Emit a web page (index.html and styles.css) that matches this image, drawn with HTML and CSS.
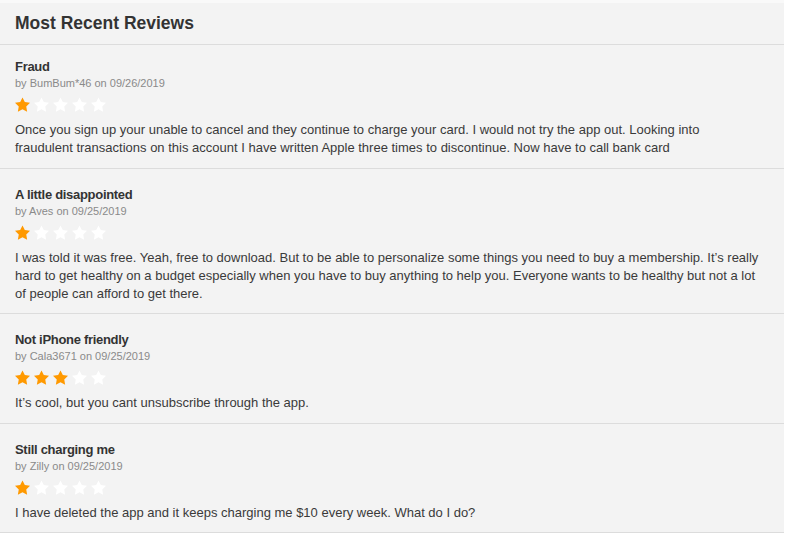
FILE: index.html
```html
<!DOCTYPE html>
<html lang="en">
<head>
<meta charset="utf-8">
<title>Most Recent Reviews</title>
<link rel="stylesheet" href="styles.css">
</head>
<body>
<svg width="0" height="0" class="defs" aria-hidden="true">
  <defs>
    <path id="star" d="M12 2l3.09 6.26L22 9.27l-5 4.87 1.18 6.88L12 17.77l-6.18 3.25L7 14.14 2 9.27l6.91-1.01L12 2z"/>
  </defs>
</svg>
<section class="panel">
  <h2 class="panel-title">Most Recent Reviews</h2>

  <article class="review">
    <h3 class="review-title">Fraud</h3>
    <div class="byline">by BumBum*46 on 09/26/2019</div>
    <div class="stars">
      <svg class="star on" viewBox="2 1.5 20 20"><use href="#star"/></svg>
      <svg class="star" viewBox="2 1.5 20 20"><use href="#star"/></svg>
      <svg class="star" viewBox="2 1.5 20 20"><use href="#star"/></svg>
      <svg class="star" viewBox="2 1.5 20 20"><use href="#star"/></svg>
      <svg class="star" viewBox="2 1.5 20 20"><use href="#star"/></svg>
    </div>
    <p class="body">Once you sign up your unable to cancel and they continue to charge your card. I would not try the app out. Looking into<br>fraudulent transactions on this account I have written Apple three times to discontinue. Now have to call bank card</p>
  </article>

  <article class="review">
    <h3 class="review-title">A little disappointed</h3>
    <div class="byline">by Aves on 09/25/2019</div>
    <div class="stars">
      <svg class="star on" viewBox="2 1.5 20 20"><use href="#star"/></svg>
      <svg class="star" viewBox="2 1.5 20 20"><use href="#star"/></svg>
      <svg class="star" viewBox="2 1.5 20 20"><use href="#star"/></svg>
      <svg class="star" viewBox="2 1.5 20 20"><use href="#star"/></svg>
      <svg class="star" viewBox="2 1.5 20 20"><use href="#star"/></svg>
    </div>
    <p class="body">I was told it was free. Yeah, free to download. But to be able to personalize some things you need to buy a membership. It’s really<br>hard to get healthy on a budget especially when you have to buy anything to help you. Everyone wants to be healthy but not a lot<br>of people can afford to get there.</p>
  </article>

  <article class="review">
    <h3 class="review-title">Not iPhone friendly</h3>
    <div class="byline">by Cala3671 on 09/25/2019</div>
    <div class="stars">
      <svg class="star on" viewBox="2 1.5 20 20"><use href="#star"/></svg>
      <svg class="star on" viewBox="2 1.5 20 20"><use href="#star"/></svg>
      <svg class="star on" viewBox="2 1.5 20 20"><use href="#star"/></svg>
      <svg class="star" viewBox="2 1.5 20 20"><use href="#star"/></svg>
      <svg class="star" viewBox="2 1.5 20 20"><use href="#star"/></svg>
    </div>
    <p class="body">It’s cool, but you cant unsubscribe through the app.</p>
  </article>

  <article class="review">
    <h3 class="review-title">Still charging me</h3>
    <div class="byline">by Zilly on 09/25/2019</div>
    <div class="stars">
      <svg class="star on" viewBox="2 1.5 20 20"><use href="#star"/></svg>
      <svg class="star" viewBox="2 1.5 20 20"><use href="#star"/></svg>
      <svg class="star" viewBox="2 1.5 20 20"><use href="#star"/></svg>
      <svg class="star" viewBox="2 1.5 20 20"><use href="#star"/></svg>
      <svg class="star" viewBox="2 1.5 20 20"><use href="#star"/></svg>
    </div>
    <p class="body">I have deleted the app and it keeps charging me $10 every week. What do I do?</p>
  </article>
</section>
</body>
</html>
```

FILE: styles.css
```css
html, body {
  margin: 0;
  padding: 0;
  background: #ffffff;
}

body {
  font-family: "Liberation Sans", Arial, Helvetica, sans-serif;
  color: #333333;
}

.defs {
  position: absolute;
  width: 0;
  height: 0;
  overflow: hidden;
}

.panel {
  width: 784px;
  background: #f3f3f3;
  border-top: 3px solid #f9f9f9;
}

.panel-title {
  margin: 0;
  padding: 9px 15px 10px;
  font-size: 17.5px;
  line-height: 22px;
  font-weight: bold;
  color: #333333;
  border-bottom: 1px solid #dcdcdc;
}

.review {
  padding: 18px 5px 10.5px 15px;
  border-bottom: 1px solid #dcdcdc;
}

.review:first-of-type {
  padding-top: 14px;
}

.review-title {
  margin: 0;
  font-size: 13px;
  line-height: 16px;
  font-weight: bold;
  letter-spacing: -0.3px;
  color: #333333;
}

.byline {
  margin-top: 1px;
  font-size: 11px;
  line-height: 14px;
  color: #8a8a8a;
}

.stars {
  display: flex;
  gap: 4px;
  margin-top: 7px;
  height: 15px;
}

.star {
  width: 15px;
  height: 15px;
  display: block;
  fill: #ffffff;
}

.star.on {
  fill: #ff9900;
}

.body {
  margin: 9px 0 0;
  font-size: 13px;
  line-height: 18px;
  color: #3a3a3a;
}
```
